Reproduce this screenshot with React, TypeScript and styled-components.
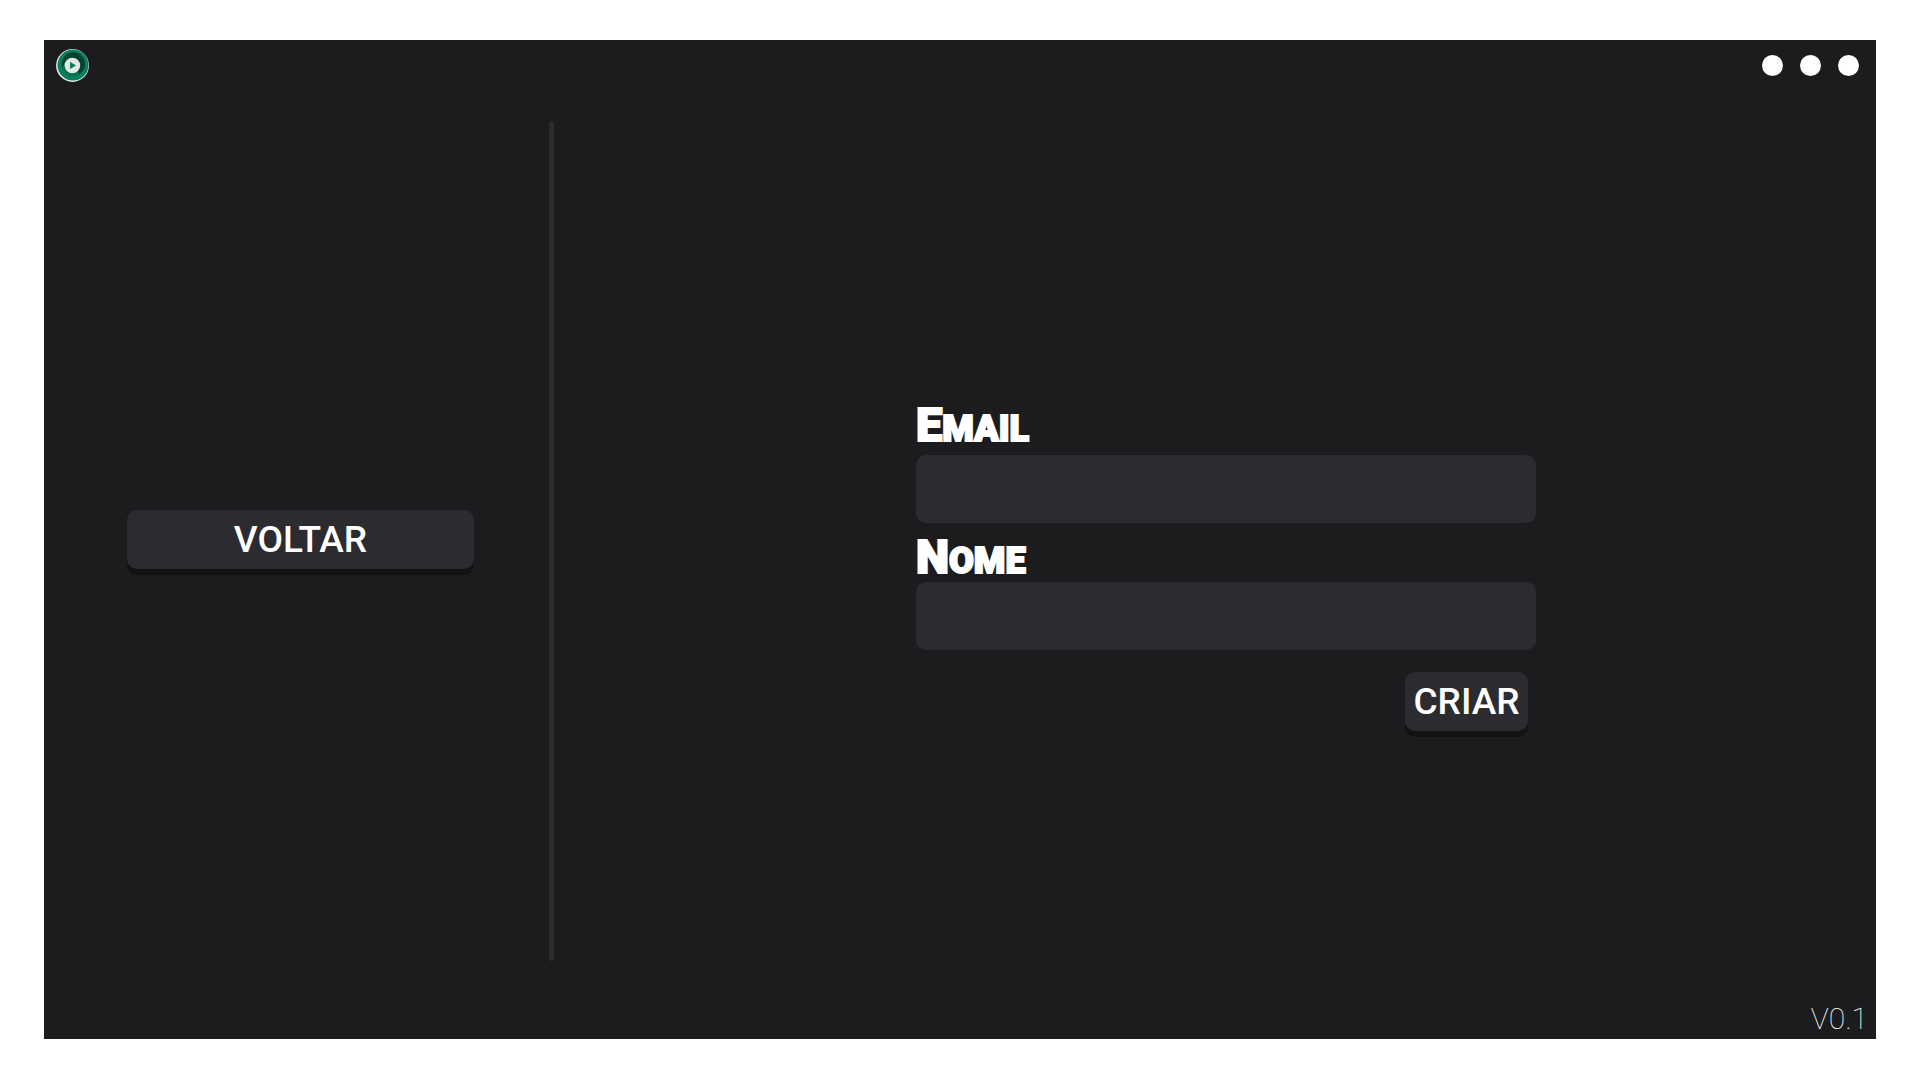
import React from "react";
import styled, { createGlobalStyle } from "styled-components";

const GlobalStyle = createGlobalStyle`
  *, *::before, *::after { box-sizing: border-box; }
  body {
    margin: 0;
    background: #ffffff;
    color: #ffffff;
    font-family: Roboto, "Liberation Sans", sans-serif;
  }
`;

const Page = styled.div`
  display: flex;
  min-height: 100vh;
  padding: 40px 44px 41px;
`;

const Window = styled.main`
  flex: 1;
  display: flex;
  flex-direction: column;
  background: #1c1c1e;
`;

const TitleBar = styled.header`
  display: flex;
  align-items: center;
  justify-content: space-between;
  height: 51px;
  margin-bottom: 30px;
  padding: 0 17px 0 12px;
`;

const Logo = styled.svg`
  display: block;
  width: 33px;
  height: 33px;
`;

const WindowControls = styled.div`
  display: flex;
  gap: 17px;
`;

const Dot = styled.button`
  width: 21px;
  height: 21px;
  padding: 0;
  border: 0;
  border-radius: 50%;
  background: #ffffff;
  cursor: pointer;
`;

const Content = styled.div`
  flex: 1;
  display: grid;
  grid-template-columns: minmax(0, 505fr) 5px minmax(0, 1322fr);
`;

const Sidebar = styled.nav`
  display: flex;
  align-items: center;
  padding: 0 75px 3px 83px;
`;

const Divider = styled.div`
  border-radius: 3px;
  background: #2c2c2e;
`;

const FormArea = styled.section`
  display: flex;
  align-items: center;
  justify-content: center;
  padding: 50px 0 0 22px;
`;

const Form = styled.form`
  width: 100%;
  max-width: 620px;
`;

const Field = styled.div<{ $gap: number }>`
  display: flex;
  flex-direction: column;
  gap: ${({ $gap }) => $gap}px;
  & + & {
    margin-top: 10px;
  }
`;

const Label = styled.label`
  display: block;
  height: 48px;
  font-size: 36px;
  font-weight: 900;
  line-height: 48px;
  text-transform: uppercase;
  -webkit-text-stroke: 2px #ffffff;
  &::first-letter {
    font-size: 47px;
  }
`;

const TextInput = styled.input`
  width: 100%;
  height: 68px;
  padding: 0 20px;
  border: 0;
  border-radius: 10px;
  outline: 0;
  background: #2c2b30;
  color: #ffffff;
  font: 400 28px Roboto, "Liberation Sans", sans-serif;
`;

const Actions = styled.div`
  display: flex;
  justify-content: flex-end;
  margin-top: 22px;
  padding-right: 8px;
`;

const Button = styled.button<{ $width: string }>`
  width: ${({ $width }) => $width};
  height: 59px;
  padding: 0;
  border: 0;
  border-radius: 10px;
  background: #2c2b30;
  box-shadow: 0 6px 0 #121212;
  color: #ffffff;
  font: 500 37px/60px Roboto, "Liberation Sans", sans-serif;
  cursor: pointer;
`;

const Footer = styled.footer`
  display: flex;
  align-items: flex-end;
  justify-content: flex-end;
  height: 78px;
  padding-right: 8px;
  font-size: 30px;
  font-weight: 100;
  line-height: 40px;
`;

export default function App() {
  return (
    <>
      <GlobalStyle />
      <Page>
        <Window>
          <TitleBar>
            <Logo viewBox="0 0 33 33" aria-hidden="true">
              <circle cx="16.5" cy="16.5" r="16.4" fill="#e9eeec" />
              <circle cx="17" cy="16.1" r="15.5" fill="#09805b" />
              <circle cx="17.4" cy="15" r="11.7" fill="#04432f" />
              <path d="M6 18.5C8 26 17 29.5 24 25.2L20 21L9 14Z" fill="#07704f" />
              <circle cx="16.4" cy="16.5" r="7.8" fill="#e5e7e6" />
              <path d="M14 12.8L20 16.4L14 20Z" fill="#09805b" />
            </Logo>
            <WindowControls>
              <Dot type="button" aria-label="Minimizar" />
              <Dot type="button" aria-label="Maximizar" />
              <Dot type="button" aria-label="Fechar" />
            </WindowControls>
          </TitleBar>
          <Content>
            <Sidebar>
              <Button type="button" $width="100%">VOLTAR</Button>
            </Sidebar>
            <Divider />
            <FormArea>
              <Form onSubmit={(event) => event.preventDefault()}>
                <Field $gap={6}>
                  <Label htmlFor="email">Email</Label>
                  <TextInput id="email" type="email" />
                </Field>
                <Field $gap={1}>
                  <Label htmlFor="nome">Nome</Label>
                  <TextInput id="nome" type="text" />
                </Field>
                <Actions>
                  <Button type="submit" $width="123px">CRIAR</Button>
                </Actions>
              </Form>
            </FormArea>
          </Content>
          <Footer>V0.1</Footer>
        </Window>
      </Page>
    </>
  );
}
